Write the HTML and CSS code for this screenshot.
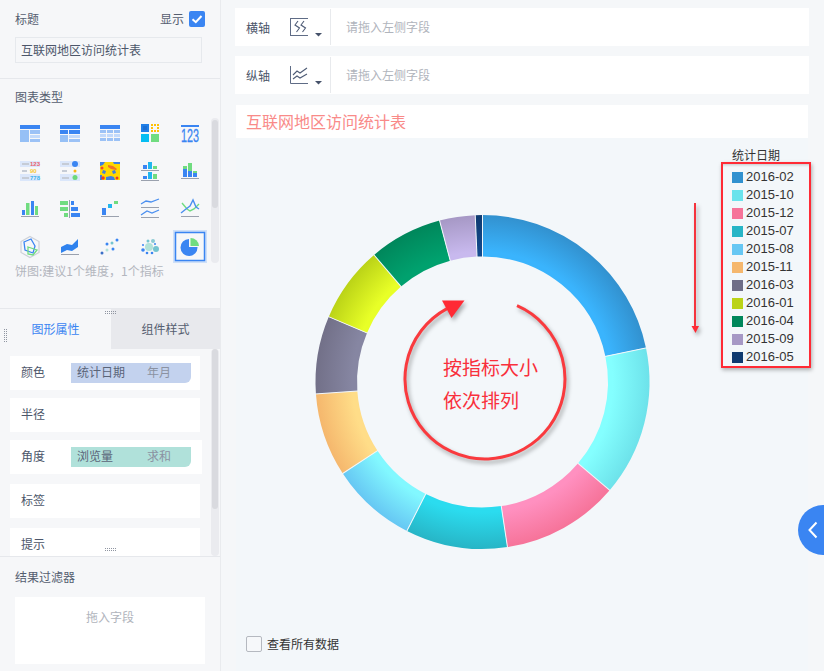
FILE: index.html
```html
<!DOCTYPE html>
<html lang="zh-CN">
<head>
<meta charset="utf-8">
<title>互联网地区访问统计表</title>
<link rel="stylesheet" href="styles.css">
</head>
<body>
<div class="page">
  <aside class="side">
    <section class="sec-title">
      <div class="title-row">
        <span class="label">标题</span>
        <span class="show"><span class="label">显示</span>
          <svg class="check" viewBox="0 0 16 16"><rect width="16" height="16" rx="2" fill="#3a85f2"/><path d="M3.5 8.2 6.8 11.2 12.5 5" fill="none" stroke="#fff" stroke-width="2"/></svg>
        </span>
      </div>
      <div class="title-input">互联网地区访问统计表</div>
    </section>

    <section class="sec-type">
      <div class="label type-head">图表类型</div>
      <div class="type-grid">
        <svg class="ic" viewBox="10 114 40 38"><rect x="20" y="125" width="20" height="4" fill="#3a85f2"/><rect x="20" y="130" width="9" height="12" fill="#96c0f6"/><rect x="30" y="130" width="10" height="4" fill="#9cc2f6"/><rect x="30" y="135" width="10" height="3" fill="#c3daFb"/><rect x="30" y="139" width="10" height="3" fill="#9cc2f6"/></svg>
        <svg class="ic" viewBox="50 114 40 38"><rect x="60" y="125" width="20" height="4" fill="#3a85f2"/><rect x="60" y="130" width="8" height="4" fill="#3a85f2"/><rect x="69" y="130" width="11" height="4" fill="#3a85f2"/><rect x="60" y="135" width="8" height="7" fill="#96c0f6"/><rect x="69" y="135" width="11" height="3" fill="#c3daFb"/><rect x="69" y="139" width="11" height="3" fill="#9cc2f6"/></svg>
        <svg class="ic" viewBox="90 114 40 38"><rect x="100" y="125" width="20" height="4" fill="#3a85f2"/><path d="M100 130h6v3h-6zM107 130h6v3h-6zM114 130h6v3h-6zM100 138h6v3h-6zM107 138h6v3h-6zM114 138h6v3h-6z" fill="#9cc2f6"/><path d="M100 134h6v3h-6zM107 134h6v3h-6zM114 134h6v3h-6z" fill="#c3daFb"/></svg>
        <svg class="ic" viewBox="130 114 40 38"><rect x="141" y="124" width="8" height="8" fill="#1f7fe8"/><rect x="143" y="126" width="4" height="4" fill="#1b6fd4"/><path d="M151 124h2v2h-2zM154 124h2v2h-2zM157 124h2v2h-2zM151 127h2v2h-2zM157 127h2v2h-2zM151 130h2v2h-2zM154 130h2v2h-2zM157 130h2v2h-2z" fill="#ffc107"/><rect x="141" y="134" width="8" height="8" fill="#06bdf2"/><rect x="151" y="134" width="8" height="8" fill="#70dc80"/></svg>
        <svg class="ic" viewBox="170 114 40 38"><rect x="181" y="125" width="18" height="2" fill="#3a85f2"/><text x="181" y="142" class="ic-num" textLength="18" lengthAdjust="spacingAndGlyphs">123</text></svg>

        <svg class="ic" viewBox="10 152 40 38"><rect x="20" y="161" width="20" height="6" fill="#dbe7fb"/><rect x="20" y="174" width="20" height="7" fill="#dbe7fb"/><path d="M22 163h7v2h-7zM22 170h5v2h-5zM22 177h7v2h-7z" fill="#c6ccd6"/><text x="30" y="166" class="ic-tiny" fill="#ea5f6c">123</text><text x="30" y="173" class="ic-tiny" fill="#f6c63a">90</text><text x="30" y="180" class="ic-tiny" fill="#40b4ee">778</text></svg>
        <svg class="ic" viewBox="50 152 40 38"><rect x="60" y="161" width="20" height="6" fill="#dbe7fb"/><rect x="60" y="174" width="20" height="7" fill="#dbe7fb"/><path d="M62 163h7v2h-7zM62 170h5v2h-5zM62 177h7v2h-7z" fill="#c6ccd6"/><circle cx="75" cy="164" r="3" fill="#3a85f2"/><circle cx="75" cy="171" r="1.5" fill="#f9b617"/><circle cx="75" cy="177.500" r="2.500" fill="#6cd87c"/></svg>
        <svg class="ic" viewBox="90 152 40 38"><rect x="100" y="162" width="20" height="18" fill="#ffd800"/><path d="M100 162h5l-2 3-3 1zM103 170l3 1-1 3-3-1zM112 171l3-1 1 3-3 1zM113 162h7v2h-6zM106 177l5-1 3 1 1 3h-9zM100 175h2v5h-2z" fill="#3f7fe0"/><circle cx="102" cy="168" r="1.500" fill="#f04a2a"/><path d="M108 165l5 1 4 3-1 1-5-1-3-2z" fill="#f0712a"/><circle cx="103" cy="178" r="1.800" fill="#ee3a2a"/><circle cx="117" cy="178" r="1.500" fill="#ee3a2a"/></svg>
        <svg class="ic" viewBox="130 152 40 38"><rect x="143" y="165" width="4" height="4" fill="#3a85f2"/><rect x="148" y="162" width="4" height="7" fill="#22b6ee"/><rect x="153" y="166" width="4" height="3" fill="#70dc80"/><rect x="141" y="170" width="18" height="1" fill="#9aa1ae"/><rect x="143" y="176" width="4" height="3" fill="#3a85f2"/><rect x="148" y="172" width="4" height="7" fill="#22b6ee"/><rect x="153" y="174" width="4" height="5" fill="#70dc80"/><rect x="141" y="180" width="18" height="1" fill="#9aa1ae"/></svg>
        <svg class="ic" viewBox="170 152 40 38"><rect x="183" y="169" width="4" height="8" fill="#3a85f2"/><rect x="183" y="166" width="4" height="3" fill="#70dc80"/><rect x="188" y="171" width="4" height="6" fill="#3a85f2"/><rect x="188" y="163" width="4" height="8" fill="#70dc80"/><rect x="193" y="173" width="4" height="4" fill="#3a85f2"/><rect x="193" y="171" width="4" height="2" fill="#70dc80"/><rect x="181" y="178" width="18" height="1" fill="#9aa1ae"/></svg>

        <svg class="ic" viewBox="10 190 40 38"><rect x="22" y="210" width="3" height="5" fill="#3a85f2"/><rect x="26" y="203" width="3.500" height="12" fill="#70dc80"/><rect x="31" y="201" width="3" height="14" fill="#3a85f2"/><rect x="35" y="206" width="3" height="9" fill="#70dc80"/><rect x="21" y="216" width="18" height="1" fill="#9aa1ae"/></svg>
        <svg class="ic" viewBox="50 190 40 38"><rect x="69" y="200" width="1" height="18" fill="#9aa1ae"/><path d="M60 201h8v4h-8zM60 207h8v4h-8zM64 213h4v4h-4z" fill="#70dc80"/><path d="M71 201h3v4h-3zM71 207h7v4h-7zM71 213h9v4h-9z" fill="#3a85f2"/></svg>
        <svg class="ic" viewBox="90 190 40 38"><rect x="102" y="208" width="4" height="7" fill="#3a85f2"/><rect x="108" y="204" width="4" height="4" fill="#22b6ee"/><rect x="114" y="201" width="4" height="3" fill="#70dc80"/><rect x="101" y="216" width="18" height="1" fill="#9aa1ae"/></svg>
        <svg class="ic" viewBox="130 190 40 38"><path d="M141 204 146 201 151 202 159 199" fill="none" stroke="#4a8ff0" stroke-width="1.300"/><rect x="141" y="207" width="18" height="1" fill="#9aa1ae"/><path d="M141 215 147 211 152 213 159 210" fill="none" stroke="#4a8ff0" stroke-width="1.300"/><rect x="141" y="217" width="18" height="1" fill="#9aa1ae"/></svg>
        <svg class="ic" viewBox="170 190 40 38"><path d="M182 203 187 209 190 211 194 209 199 204" fill="none" stroke="#70dc80" stroke-width="1.400"/><path d="M181 213 186 209 190 206 193 200 196 207 199 209" fill="none" stroke="#4a8ff0" stroke-width="1.400"/><rect x="181" y="216" width="18" height="1" fill="#9aa1ae"/></svg>

        <svg class="ic" viewBox="10 228 40 38"><path d="M30 236.500 39 241.500V252.500L30 257.500 21 252.500V241.500Z" fill="none" stroke="#cdd1d8" stroke-width="1.200"/><path d="M24 242 31 239 35 246 33 253 25 250Z" fill="none" stroke="#3a85f2" stroke-width="1.300"/><path d="M28 247 37 250 33 255 28 254Z" fill="none" stroke="#70dc80" stroke-width="1.300"/></svg>
        <svg class="ic" viewBox="50 228 40 38"><path d="M61 247 67 244 72 245 78 239V247L72 251 67 250 61 253Z" fill="#2f82ee"/><rect x="61" y="254" width="18" height="1" fill="#9aa1ae"/></svg>
        <svg class="ic" viewBox="90 228 40 38"><circle cx="102" cy="253" r="1.500" fill="#3a6fc8"/><circle cx="107" cy="244" r="1.500" fill="#3a85f2"/><circle cx="107" cy="250" r="1.500" fill="#b2e2d8"/><circle cx="112" cy="243" r="1.500" fill="#74c4d0"/><circle cx="113" cy="249" r="1.500" fill="#3a85f2"/><circle cx="117" cy="240" r="1.500" fill="#3a85f2"/></svg>
        <svg class="ic" viewBox="130 228 40 38"><circle cx="149" cy="247" r="4" fill="#b2e2d8"/><circle cx="156" cy="249" r="3" fill="#74c4d0"/><circle cx="153" cy="241" r="2" fill="#8ccad4"/><circle cx="148" cy="241" r="1.500" fill="#74c4d0"/><circle cx="143" cy="250" r="1.800" fill="#3a85f2"/><circle cx="143" cy="245" r="1" fill="#3a85f2"/><circle cx="147" cy="253" r="1.300" fill="#3a85f2"/><circle cx="152" cy="253" r="1.300" fill="#3a85f2"/><circle cx="155" cy="244" r="1" fill="#3a85f2"/></svg>
        <svg class="ic" viewBox="170 228 40 38"><rect x="174" y="231" width="32" height="31" fill="none" stroke="#cfe0f8" stroke-width="2"/><rect x="175.500" y="232.500" width="29" height="28" fill="#f6f7f9" stroke="#3a85f2" stroke-width="1.500"/><path d="M189 239V247H197.500A8.500 8.500 0 1 1 189 239Z" fill="#3a85f2"/><path d="M190.500 238A8.500 8.500 0 0 1 199 246H190.500Z" fill="#70dc80"/></svg>
      </div>
      <div class="hint">饼图:建议1个维度，1个指标</div>
      <div class="scroll-track type-track"><div class="scroll-thumb type-thumb"></div></div>
      <div class="grip grip-h grip-top"></div>
    </section>

    <section class="sec-tabs">
      <div class="tabs">
        <div class="tab tab-on">图形属性</div>
        <div class="tab">组件样式</div>
      </div>
      <div class="grip grip-v"></div>
      <div class="props">
        <div class="prop"><span class="prop-name">颜色</span>
          <div class="pill pill-blue"><span class="pill-a">统计日期</span><span class="pill-b">年月</span></div></div>
        <div class="prop"><span class="prop-name">半径</span></div>
        <div class="prop prop-wide"><span class="prop-name">角度</span>
          <div class="pill pill-green"><span class="pill-a">浏览量</span><span class="pill-b">求和</span></div></div>
        <div class="prop prop-far"><span class="prop-name">标签</span></div>
        <div class="prop prop-far"><span class="prop-name">提示</span></div>
        <div class="scroll-track props-track"><div class="scroll-thumb props-thumb"></div></div>
        <div class="grip grip-h grip-bottom"></div>
      </div>
    </section>

    <section class="sec-filter">
      <div class="label filter-head">结果过滤器</div>
      <div class="drop">拖入字段</div>
    </section>
  </aside>

  <main class="main">
    <div class="axis">
      <span class="axis-name">横轴</span>
      <svg class="axis-ic" viewBox="0 0 33 20"><path d="M1 1.500H19M1 18.500H19M1.500 1V19" fill="none" stroke="#5f6c86" stroke-width="1"/><path d="M9 4 6 8 10.500 11 7.500 15M15 4 12 8 16.500 11 13.500 15" fill="none" stroke="#4f5c76" stroke-width="1.100"/><path d="M26 16h7l-3.500 3.500z" fill="#46526a"/></svg>
      <span class="axis-hint">请拖入左侧字段</span>
    </div>
    <div class="axis">
      <span class="axis-name">纵轴</span>
      <svg class="axis-ic" viewBox="0 0 33 20"><path d="M1.500 1V18.500H19" fill="none" stroke="#5f6c86" stroke-width="1"/><path d="M4 10 8 6 11 8 18 3M4 14 8 11 11 13 18 9" fill="none" stroke="#4f5c76" stroke-width="1.100"/><path d="M26 16h7l-3.500 3.500z" fill="#46526a"/></svg>
      <span class="axis-hint">请拖入左侧字段</span>
    </div>
    <div class="chart-title">互联网地区访问统计表</div>
    <div class="chart">
      <svg class="canvas" viewBox="236 138 572 533">
        <defs>
          <radialGradient id="g1" gradientUnits="userSpaceOnUse" cx="482.500" cy="382" r="167"><stop offset=".78" stop-color="#3ab4fd"/><stop offset="1" stop-color="#3291cf"/></radialGradient>
          <radialGradient id="g2" gradientUnits="userSpaceOnUse" cx="482.500" cy="382" r="167"><stop offset=".78" stop-color="#84ffff"/><stop offset="1" stop-color="#6de2ea"/></radialGradient>
          <radialGradient id="g3" gradientUnits="userSpaceOnUse" cx="482.500" cy="382" r="167"><stop offset=".78" stop-color="#ff90c0"/><stop offset="1" stop-color="#f67399"/></radialGradient>
          <radialGradient id="g4" gradientUnits="userSpaceOnUse" cx="482.500" cy="382" r="167"><stop offset=".78" stop-color="#2bdcef"/><stop offset="1" stop-color="#27b5c6"/></radialGradient>
          <radialGradient id="g5" gradientUnits="userSpaceOnUse" cx="482.500" cy="382" r="167"><stop offset=".78" stop-color="#82f8ff"/><stop offset="1" stop-color="#66c7f3"/></radialGradient>
          <radialGradient id="g6" gradientUnits="userSpaceOnUse" cx="482.500" cy="382" r="167"><stop offset=".78" stop-color="#ffdd88"/><stop offset="1" stop-color="#f5b76d"/></radialGradient>
          <radialGradient id="g7" gradientUnits="userSpaceOnUse" cx="482.500" cy="382" r="167"><stop offset=".78" stop-color="#8686a2"/><stop offset="1" stop-color="#727088"/></radialGradient>
          <radialGradient id="g8" gradientUnits="userSpaceOnUse" cx="482.500" cy="382" r="167"><stop offset=".78" stop-color="#e8ff27"/><stop offset="1" stop-color="#bbd317"/></radialGradient>
          <radialGradient id="g9" gradientUnits="userSpaceOnUse" cx="482.500" cy="382" r="167"><stop offset=".78" stop-color="#00a16e"/><stop offset="1" stop-color="#00875b"/></radialGradient>
          <radialGradient id="g10" gradientUnits="userSpaceOnUse" cx="482.500" cy="382" r="167"><stop offset=".78" stop-color="#c8b9ee"/><stop offset="1" stop-color="#a698c5"/></radialGradient>
          <radialGradient id="g11" gradientUnits="userSpaceOnUse" cx="482.500" cy="382" r="167"><stop offset=".78" stop-color="#134a8c"/><stop offset="1" stop-color="#0f3a70"/></radialGradient>
        </defs>
        <g class="ring">
          <circle pathLength="360" stroke-dasharray="78.2 360" stroke="url(#g1)" cx="482.500" cy="382" r="146.250" transform="rotate(-90 482.500 382)"/>
          <circle pathLength="360" stroke-dasharray="52.2 360" stroke="url(#g2)" cx="482.500" cy="382" r="146.250" transform="rotate(-11.800 482.500 382)"/>
          <circle pathLength="360" stroke-dasharray="41 360" stroke="url(#g3)" cx="482.500" cy="382" r="146.250" transform="rotate(40.400 482.500 382)"/>
          <circle pathLength="360" stroke-dasharray="35.500 360" stroke="url(#g4)" cx="482.500" cy="382" r="146.250" transform="rotate(81.400 482.500 382)"/>
          <circle pathLength="360" stroke-dasharray="29.900 360" stroke="url(#g5)" cx="482.500" cy="382" r="146.250" transform="rotate(116.900 482.500 382)"/>
          <circle pathLength="360" stroke-dasharray="29.100 360" stroke="url(#g6)" cx="482.500" cy="382" r="146.250" transform="rotate(146.800 482.500 382)"/>
          <circle pathLength="360" stroke-dasharray="27.100 360" stroke="url(#g7)" cx="482.500" cy="382" r="146.250" transform="rotate(175.900 482.500 382)"/>
          <circle pathLength="360" stroke-dasharray="26.500 360" stroke="url(#g8)" cx="482.500" cy="382" r="146.250" transform="rotate(203 482.500 382)"/>
          <circle pathLength="360" stroke-dasharray="25.600 360" stroke="url(#g9)" cx="482.500" cy="382" r="146.250" transform="rotate(229.500 482.500 382)"/>
          <circle pathLength="360" stroke-dasharray="12.400 360" stroke="url(#g10)" cx="482.500" cy="382" r="146.250" transform="rotate(255.100 482.500 382)"/>
          <circle pathLength="360" stroke-dasharray="2.500 360" stroke="url(#g11)" cx="482.500" cy="382" r="146.250" transform="rotate(267.500 482.500 382)"/>
        </g>
        <g class="seps">
          <line x1="482.500" y1="257" x2="482.500" y2="214" transform="rotate(0 482.500 382)"/>
          <line x1="482.500" y1="257" x2="482.500" y2="214" transform="rotate(78.200 482.500 382)"/>
          <line x1="482.500" y1="257" x2="482.500" y2="214" transform="rotate(130.400 482.500 382)"/>
          <line x1="482.500" y1="257" x2="482.500" y2="214" transform="rotate(171.400 482.500 382)"/>
          <line x1="482.500" y1="257" x2="482.500" y2="214" transform="rotate(206.900 482.500 382)"/>
          <line x1="482.500" y1="257" x2="482.500" y2="214" transform="rotate(236.800 482.500 382)"/>
          <line x1="482.500" y1="257" x2="482.500" y2="214" transform="rotate(265.900 482.500 382)"/>
          <line x1="482.500" y1="257" x2="482.500" y2="214" transform="rotate(293 482.500 382)"/>
          <line x1="482.500" y1="257" x2="482.500" y2="214" transform="rotate(319.500 482.500 382)"/>
          <line x1="482.500" y1="257" x2="482.500" y2="214" transform="rotate(345.100 482.500 382)"/>
          <line x1="482.500" y1="257" x2="482.500" y2="214" transform="rotate(357.500 482.500 382)"/>
        </g>
        <g class="marks">
          <path class="mark-arc" d="M517 305.700A80 80 0 1 1 447 308.600"/>
          <path class="mark-head" d="M442 300.500H464.500L451.500 318Z"/>
          <path class="mark-line" d="M695 203V327"/>
          <path class="mark-head" d="M691.500 326H699L695.500 333Z"/>
        </g>
        <text class="mark-text" x="443" y="375">按指标大小</text>
        <text class="mark-text" x="443" y="408">依次排列</text>
      </svg>

      <div class="legend-title">统计日期</div>
      <ul class="legend">
        <li><i class="sw sw1"></i>2016-02</li>
        <li><i class="sw sw2"></i>2015-10</li>
        <li><i class="sw sw3"></i>2015-12</li>
        <li><i class="sw sw4"></i>2015-07</li>
        <li><i class="sw sw5"></i>2015-08</li>
        <li><i class="sw sw6"></i>2015-11</li>
        <li><i class="sw sw7"></i>2016-03</li>
        <li><i class="sw sw8"></i>2016-01</li>
        <li><i class="sw sw9"></i>2016-04</li>
        <li><i class="sw sw10"></i>2015-09</li>
        <li><i class="sw sw11"></i>2016-05</li>
      </ul>

      <label class="all"><span class="box"></span>查看所有数据</label>
    </div>
  </main>

  <button class="fold" aria-label="收起"><svg viewBox="0 0 12 20"><path d="M9.500 2.500 2.500 10 9.500 17.500" fill="none" stroke="#fff" stroke-width="2"/></svg></button>
</div>
</body>
</html>
```

FILE: styles.css
```css
* { box-sizing: border-box; }
html, body { margin: 0; padding: 0; }
body {
  font-family: "Noto Sans CJK SC", "Liberation Sans", sans-serif;
  font-size: 12px;
  color: #4c566a;
  overflow: hidden;
}
.page {
  position: relative;
  display: flex;
  width: 824px;
  height: 671px;
  overflow: hidden;
  background: #f5f7f9;
}

/* sidebar */
.side {
  width: 221px;
  height: 671px;
  flex: none;
  display: flex;
  flex-direction: column;
  background: #f6f7f9;
  border-right: 1px solid #e9ebee;
}
.label { line-height: 16px; color: #555e70; }
.sec-title {
  height: 79px;
  flex: none;
  padding: 11px 18px 0 15px;
  border-bottom: 1px solid #e6e8ec;
}
.title-row { display: flex; justify-content: space-between; align-items: center; height: 16px; margin-right: -3px; }
.show { display: flex; align-items: center; gap: 5px; }
.check { width: 16px; height: 16px; display: block; }
.title-input {
  width: 187px;
  height: 26px;
  margin-top: 10px;
  padding-left: 5px;
  border: 1px solid #e6e9ed;
  line-height: 23px;
  color: #4c566a;
}

.sec-type {
  position: relative;
  height: 229px;
  flex: none;
  padding: 10px 0 0 15px;
}
.type-head { height: 16px; }
.type-grid {
  display: grid;
  grid-template-columns: repeat(5, 40px);
  grid-auto-rows: 38px;
  margin: 9px 0 0 -5px;
}
.ic { width: 40px; height: 38px; display: block; }
.ic-num { font: 18px "Liberation Sans", sans-serif; fill: #3a85f2; stroke: #3a85f2; stroke-width: .3px; }
.ic-tiny { font: bold 6px "Liberation Sans", sans-serif; }
.hint { margin-top: -2px; line-height: 14px; color: #b3b6be; }

.scroll-track { position: absolute; background: #eaebef; border-radius: 4px; }
.scroll-thumb { background: #d9dadf; border-radius: 3px; width: 6px; margin: 2px auto 0; }
.type-track { left: 211px; top: 39px; width: 8px; height: 145px; }
.type-thumb { height: 88px; }
.props-track { left: 211px; top: 0; width: 8px; height: 207px; }
.props-thumb { height: 160px; margin-top: 0; }

.grip {
  position: absolute;
  background-image: conic-gradient(#8f95a1 25%, transparent 25%);
  background-size: 2px 2px;
}
.grip-h { width: 12px; height: 4px; left: 104px; }
.grip-top { bottom: -7px; z-index: 2; }
.grip-bottom { top: 199px; z-index: 2; }
.grip-v { width: 4px; height: 13px; left: 3px; top: 20px; }

.sec-tabs {
  position: relative;
  height: 248px;
  flex: none;
  border-top: 1px solid #e6e8ec;
  display: flex;
  flex-direction: column;
}
.tabs { display: flex; height: 40px; flex: none; }
.tab { flex: 1; text-align: center; line-height: 40px; color: #555e70; background: #e8e9ed; }
.tab-on { flex: none; width: 111px; background: #f6f7f9; color: #3a85f2; }
.props {
  position: relative;
  height: 207px;
  overflow: hidden;
  padding: 7px 0 0 10px;
}
.prop {
  display: flex;
  align-items: center;
  width: 190px;
  height: 34px;
  margin-bottom: 8px;
  padding-left: 11px;
  background: #fff;
}
.prop-wide { width: 192px; margin-bottom: 10px; }
.prop-far { margin-bottom: 10px; flex: none; }
.prop-name { width: 50px; flex: none; color: #4c566a; padding-bottom: 3px; }
.pill {
  display: flex;
  width: 120px;
  height: 20px;
  line-height: 18px;
  border-bottom-right-radius: 6px;
  padding-left: 6px;
}
.pill-blue { background: #c3d2ee; }
.pill-green { background: #b0e1da; }
.pill-a { width: 70px; color: #5a6478; }
.pill-b { color: #8b92a2; }

.sec-filter {
  flex: 1;
  padding: 12px 15px 0;
  border-top: 1px solid #e6e8ec;
}
.filter-head { height: 16px; }
.drop {
  width: 190px;
  height: 67px;
  margin-top: 12px;
  padding-top: 12px;
  background: #fff;
  text-align: center;
  line-height: 16px;
  color: #b0b4bc;
}

/* main column */
.main {
  width: 574px;
  flex: none;
  margin-left: 14px;
  padding-top: 8px;
  display: flex;
  flex-direction: column;
}
.axis {
  display: flex;
  align-items: center;
  height: 38px;
  flex: none;
  margin-bottom: 10px;
  background: #fff;
}
.axis-name { width: 53px; padding-left: 11px; flex: none; color: #4c566a; }
.axis-ic { width: 33px; height: 20px; flex: none; margin-left: 1px; }
.axis-hint {
  height: 36px;
  margin-left: 8px;
  padding-left: 15px;
  border-left: 1px solid #e8eaed;
  line-height: 36px;
  color: #b0b4bc;
}
.chart-title {
  height: 33px;
  flex: none;
  margin: 1px 1px 0;
  padding-left: 10px;
  background: #fff;
  font-size: 16px;
  line-height: 33px;
  color: #f98a88;
}
.chart {
  position: relative;
  flex: 1;
  margin: 0 1px;
  background: #f3f7fa;
}
.canvas { position: absolute; left: 0; top: 0; width: 572px; height: 533px; }
.ring circle { fill: none; stroke-width: 41.500; }
.seps line { stroke: #f3f7fa; stroke-width: 1; }
.marks { filter: drop-shadow(2px 3px 2px rgba(0, 0, 0, .32)); }
.mark-arc { fill: none; stroke: #f93a3e; stroke-width: 3; }
.mark-line { fill: none; stroke: #f5333c; stroke-width: 2; }
.mark-head { fill: #ff2a34; }
.mark-text { font-size: 19px; fill: #f9303c; font-family: "Noto Sans CJK SC", sans-serif; }

.legend-title { position: absolute; left: 496px; top: 9px; line-height: 16px; color: #333; }
.legend {
  position: absolute;
  left: 485px;
  top: 24px;
  width: 90px;
  height: 206px;
  margin: 0;
  padding: 4px 0 0 9px;
  list-style: none;
  border: 2px solid #ff2a35;
  box-shadow: 1px 2px 4px rgba(0, 0, 0, .3), inset 0 3px 3px -2px rgba(0, 0, 0, .2);
}
.legend li {
  display: flex;
  align-items: center;
  gap: 3px;
  height: 18px;
  font: 13px/18px "Liberation Sans", sans-serif;
  color: #333;
}
.sw { width: 11px; height: 11px; flex: none; }
.sw1 { background: #3191cf; }
.sw2 { background: #6ae3ec; }
.sw3 { background: #f67399; }
.sw4 { background: #27b5c6; }
.sw5 { background: #66c7f3; }
.sw6 { background: #f5b76d; }
.sw7 { background: #6f6e87; }
.sw8 { background: #bbd317; }
.sw9 { background: #00875b; }
.sw10 { background: #a698c5; }
.sw11 { background: #0f3a70; }

.all {
  position: absolute;
  left: 10px;
  top: 498px;
  display: flex;
  align-items: center;
  gap: 5px;
  line-height: 16px;
  color: #333;
}
.box { width: 16px; height: 16px; border: 1px solid #b5b9c0; border-radius: 2px; background: #f6f8fa; }

.fold {
  position: absolute;
  left: 798px;
  top: 505px;
  width: 52px;
  height: 50px;
  padding: 0 0 0 9px;
  border: 0;
  border-radius: 25px;
  background: #3a85f2;
  display: flex;
  align-items: center;
}
.fold svg { width: 12px; height: 20px; display: block; }
```
